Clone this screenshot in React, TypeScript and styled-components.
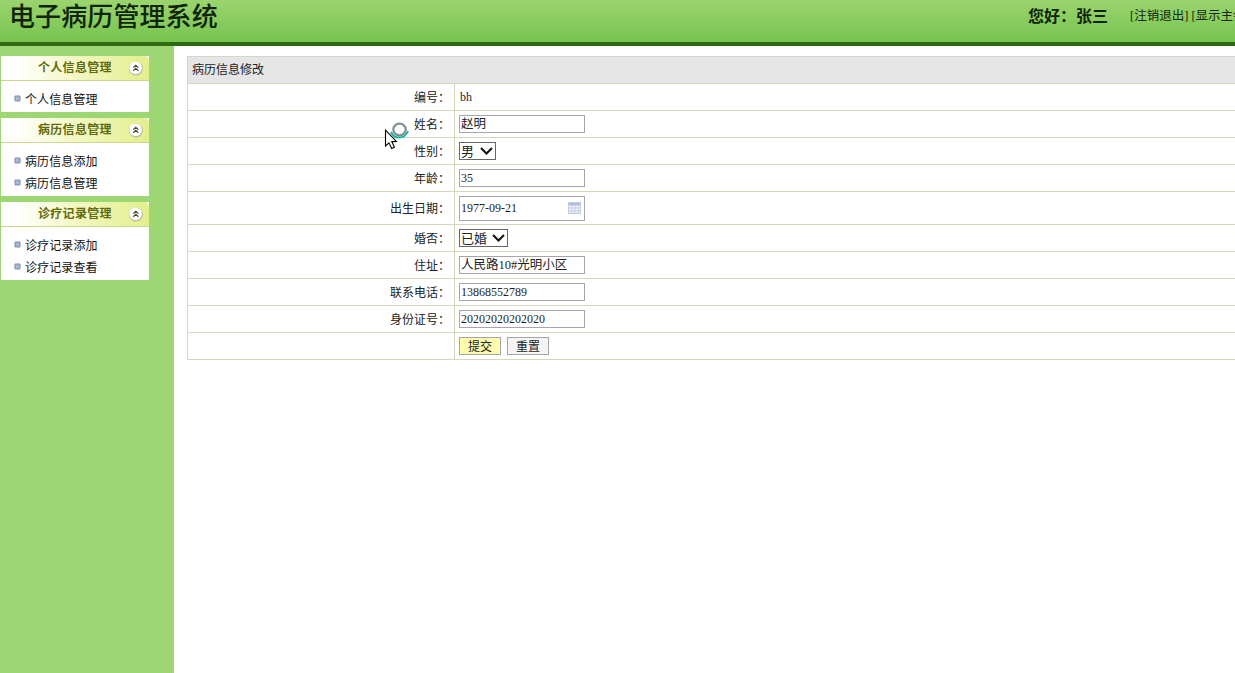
import React from "react";
import styled, { createGlobalStyle } from "styled-components";

const GlobalStyle = createGlobalStyle`
  html, body {
    margin: 0;
    padding: 0;
    height: 100%;
    overflow: hidden;
    background: #fff;
  }
  body {
    font-family: "Liberation Serif", "Noto Sans CJK SC", serif;
    font-size: 12px;
    color: #000;
  }
`;

const menus = [
  { title: "个人信息管理", items: ["个人信息管理"] },
  { title: "病历信息管理", items: ["病历信息添加", "病历信息管理"] },
  { title: "诊疗记录管理", items: ["诊疗记录添加", "诊疗记录查看"] },
];

function CollapseIcon() {
  return (
    <Collapse>
      <svg width="16" height="16" viewBox="0 0 16 16">
        <circle cx="8" cy="8.5" r="7" fill="#b9bfa0" />
        <circle cx="7.6" cy="7.8" r="6.3" fill="#fff" />
        <path d="M5.2 7.6 L7.8 5.2 L10.4 7.6 M5.2 10.8 L7.8 8.4 L10.4 10.8" fill="none" stroke="#4a4a3a" strokeWidth="1.2" />
      </svg>
    </Collapse>
  );
}

function CalendarIcon() {
  return (
    <CalendarSlot>
      <svg width="13" height="12" viewBox="0 0 13 12">
        <rect x="0.5" y="0.5" width="12" height="11" fill="#eef2f8" stroke="#c3cde0" />
        <rect x="1" y="1" width="11" height="2.5" fill="#aebfd9" />
        <path d="M1 6H12M1 9H12M4 3.5V11M7 3.5V11M10 3.5V11" stroke="#c6d1e4" strokeWidth="1" />
      </svg>
    </CalendarSlot>
  );
}

function BusyCursor() {
  return (
    <CursorLayer>
      <svg width="30" height="32" viewBox="0 0 30 32">
        <ellipse cx="15.5" cy="8.5" rx="6.2" ry="5.8" fill="#fff" stroke="#7f9094" strokeWidth="2.2" />
        <path d="M7 11 C9 15.5 12.5 16.6 15.5 16.6 C19 16.6 22 15 24 10" fill="none" stroke="#17b79c" strokeWidth="2" />
        <path d="M1.5 9 L1.5 25 L5 21.8 L7.6 27.5 L10.4 26.2 L7.8 20.6 L12.4 20.4 Z" fill="#fff" stroke="#000" strokeWidth="1.1" />
      </svg>
    </CursorLayer>
  );
}

function DropDown({ width, value, options }: { width: number; value: string; options: string[] }) {
  return (
    <SelectWrap $width={width}>
      <Select defaultValue={value}>
        {options.map((o) => (
          <option key={o}>{o}</option>
        ))}
      </Select>
      <SelectArrow width="13" height="8" viewBox="0 0 13 8">
        <path d="M1 1 L6.5 6.5 L12 1" fill="none" stroke="#111" strokeWidth="2" />
      </SelectArrow>
    </SelectWrap>
  );
}

export default function App() {
  return (
    <Page>
      <GlobalStyle />
      <Header>
        <Title>电子病历管理系统</Title>
        <UserBar>
          <Greeting>您好：张三</Greeting>
          <HeaderLinks>[注销退出] [显示主会</HeaderLinks>
        </UserBar>
      </Header>
      <Body>
        <Sidebar>
          {menus.map((menu) => (
            <MenuPanel key={menu.title}>
              <MenuHead>
                <MenuTitle>{menu.title}</MenuTitle>
                <CollapseIcon />
              </MenuHead>
              <MenuList>
                {menu.items.map((item) => (
                  <MenuItem key={item}>
                    <Bullet />
                    {item}
                  </MenuItem>
                ))}
              </MenuList>
            </MenuPanel>
          ))}
        </Sidebar>
        <Main>
          <BusyCursor />
          <FormTable>
            <TableTitle>病历信息修改</TableTitle>
            <Row>
              <Label>编号：</Label>
              <Value>
                <PlainValue>bh</PlainValue>
              </Value>
            </Row>
            <Row>
              <Label>姓名：</Label>
              <Value>
                <TextInput $large defaultValue="赵明" />
              </Value>
            </Row>
            <Row>
              <Label>性别：</Label>
              <Value>
                <DropDown width={37} value="男" options={["男", "女"]} />
              </Value>
            </Row>
            <Row>
              <Label>年龄：</Label>
              <Value>
                <TextInput defaultValue="35" />
              </Value>
            </Row>
            <Row $tall>
              <Label>出生日期：</Label>
              <Value>
                <DateBox>
                  1977-09-21
                  <CalendarIcon />
                </DateBox>
              </Value>
            </Row>
            <Row>
              <Label>婚否：</Label>
              <Value>
                <DropDown width={49} value="已婚" options={["已婚", "未婚"]} />
              </Value>
            </Row>
            <Row>
              <Label>住址：</Label>
              <Value>
                <TextInput $large defaultValue="人民路10#光明小区" />
              </Value>
            </Row>
            <Row>
              <Label>联系电话：</Label>
              <Value>
                <TextInput defaultValue="13868552789" />
              </Value>
            </Row>
            <Row>
              <Label>身份证号：</Label>
              <Value>
                <TextInput defaultValue="20202020202020" />
              </Value>
            </Row>
            <Row>
              <Label />
              <Value>
                <ButtonRow>
                  <FormButton $primary>提交</FormButton>
                  <FormButton>重置</FormButton>
                </ButtonRow>
              </Value>
            </Row>
          </FormTable>
        </Main>
      </Body>
    </Page>
  );
}

const Page = styled.div`
  display: flex;
  flex-direction: column;
  width: 1235px;
  height: 673px;
  overflow: hidden;
`;

const Header = styled.header`
  flex: none;
  height: 42px;
  display: flex;
  justify-content: space-between;
  background: linear-gradient(#9bd46e, #76c44f);
  border-bottom: 4px solid #2f6a12;
`;

const Title = styled.h1`
  margin: 0;
  padding: 0 0 0 9px;
  font-family: "Liberation Serif", "Noto Sans CJK SC", sans-serif;
  font-size: 26px;
  line-height: 36px;
  height: 38px;
  font-weight: 500;
  letter-spacing: 0.1px;
  color: #10240a;
`;

const UserBar = styled.div`
  display: flex;
  align-items: flex-start;
  white-space: nowrap;
  width: 207px;
  overflow: hidden;
`;

const Greeting = styled.span`
  width: 102px;
  flex: none;
  font-family: "Noto Sans CJK SC", sans-serif;
  font-size: 16px;
  line-height: 30px;
  font-weight: 700;
  color: #10240a;
`;

const HeaderLinks = styled.span`
  font-family: "Liberation Serif", "Noto Sans CJK SC", serif;
  font-size: 12.5px;
  line-height: 33px;
  color: #13280c;
`;

const Body = styled.div`
  flex: 1;
  display: flex;
  min-height: 0;
`;

const Sidebar = styled.nav`
  flex: none;
  width: 174px;
  padding: 10px 25px 0 1px;
  box-sizing: border-box;
  display: flex;
  flex-direction: column;
  gap: 6px;
  background: #9dd672;
`;

const MenuPanel = styled.section`
  width: 148px;
  background: #fff;
`;

const MenuHead = styled.div`
  position: relative;
  height: 24px;
  border-bottom: 1px solid #c8d98a;
  border-radius: 5px 5px 0 0;
  background: linear-gradient(90deg, #ffffff 10%, #f3f7c4 50%, #e3ef8c 100%);
`;

const MenuTitle = styled.div`
  padding-left: 37px;
  font-family: "Noto Sans CJK SC", sans-serif;
  font-size: 12px;
  line-height: 22px;
  font-weight: 700;
  letter-spacing: 0.3px;
  color: #5f6b10;
`;

const Collapse = styled.span`
  position: absolute;
  top: 4px;
  right: 5px;
  width: 16px;
  height: 16px;
`;

const MenuList = styled.ul`
  list-style: none;
  margin: 0;
  padding: 6px 0 3px;
`;

const MenuItem = styled.li`
  display: flex;
  align-items: center;
  height: 22px;
  padding-left: 13px;
  gap: 4px;
  font-family: "Noto Sans CJK SC", sans-serif;
  font-size: 12px;
  letter-spacing: 0.1px;
  color: #111;
`;

const Bullet = styled.i`
  flex: none;
  width: 5px;
  height: 5px;
  border-radius: 1px;
  background: #a9b8d2;
  border: 1px solid #6f7f9c;
  box-sizing: content-box;
  transform: scale(0.85);
`;

const Main = styled.main`
  position: relative;
  flex: 1;
  padding: 10px 0 0 13px;
  background: #fff;
  min-width: 0;
`;

const CursorLayer = styled.div`
  position: absolute;
  left: 210px;
  top: 75px;
  z-index: 2;
  width: 30px;
  height: 32px;
`;

const FormTable = styled.div`
  width: 1100px;
  border-left: 1px solid #d3d8ba;
  border-top: 1px solid #d5d5d0;
`;

const TableTitle = styled.div`
  height: 26px;
  padding-left: 4px;
  background: #e5e5e5;
  border-bottom: 1px solid #d3d8ba;
  font-family: "Noto Sans CJK SC", sans-serif;
  font-size: 12px;
  line-height: 24px;
  color: #222;
`;

const Row = styled.div<{ $tall?: boolean }>`
  display: flex;
  height: ${(p) => (p.$tall ? 32 : 26)}px;
  border-bottom: 1px solid #d3d8ba;
`;

const Label = styled.div`
  flex: none;
  width: 267px;
  padding: 0 4px 2px 0;
  box-sizing: border-box;
  display: flex;
  align-items: center;
  justify-content: flex-end;
  border-right: 1px solid #d3d8ba;
  font-family: "Noto Sans CJK SC", sans-serif;
  font-size: 12px;
  color: #222;
`;

const Value = styled.div`
  flex: 1;
  display: flex;
  align-items: center;
  padding-left: 4px;
`;

const PlainValue = styled.span`
  padding-left: 1px;
  font-size: 12px;
  color: #222;
`;

const TextInput = styled.input<{ $large?: boolean }>`
  width: 126px;
  height: 18px;
  box-sizing: border-box;
  padding: 0 0 ${(p) => (p.$large ? 3 : 0)}px 1px;
  border: 1px solid #a5a5ab;
  outline: none;
  background: #fff;
  font-family: "Liberation Serif", "Noto Sans CJK SC", serif;
  font-size: ${(p) => (p.$large ? 12.5 : 12)}px;
  color: #222;
`;

const DateBox = styled.div`
  width: 126px;
  height: 25px;
  box-sizing: border-box;
  display: flex;
  align-items: center;
  justify-content: space-between;
  padding: 0 3px 0 1px;
  border: 1px solid #a5a5ab;
  font-size: 12px;
  color: #222;
`;

const CalendarSlot = styled.span`
  display: flex;
`;

/* the wrap holds the border and clips: CJK line boxes are taller than the 18px control */
const SelectWrap = styled.div<{ $width: number }>`
  position: relative;
  width: ${(p) => p.$width}px;
  height: 18px;
  box-sizing: border-box;
  border: 1px solid #666;
  overflow: hidden;
`;

const Select = styled.select`
  appearance: none;
  display: block;
  width: 100%;
  height: 24px;
  margin-top: -5px;
  box-sizing: border-box;
  padding: 0 0 0 1px;
  border: 0;
  border-radius: 0;
  background: #fff;
  font-family: "Noto Sans CJK SC", sans-serif;
  font-size: 13px;
  color: #222;
`;

const SelectArrow = styled.svg`
  position: absolute;
  right: 2px;
  top: 4px;
  pointer-events: none;
`;

const ButtonRow = styled.div`
  display: flex;
  gap: 6px;
`;

const FormButton = styled.button<{ $primary?: boolean }>`
  width: 42px;
  height: 18px;
  box-sizing: border-box;
  padding: 0;
  border: 1px solid #a5a5a5;
  background: ${(p) => (p.$primary ? "#fbfbab" : "#f4f4f4")};
  font-family: "Noto Sans CJK SC", sans-serif;
  font-size: 12px;
  line-height: 16px;
  color: #222;
`;
